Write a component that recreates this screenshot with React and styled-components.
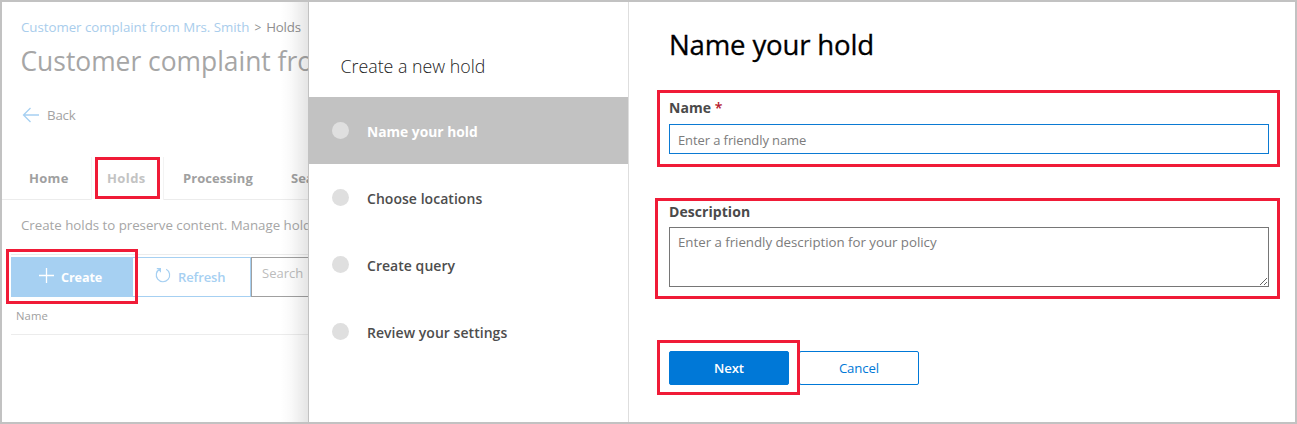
import React from "react";
import styled, { createGlobalStyle, css } from "styled-components";

const Global = createGlobalStyle`
  *, *::before, *::after { box-sizing: border-box; }
  body { margin: 0; background: #fff; font-family: "Open Sans", "Noto Sans", sans-serif; }
`;

const Frame = styled.div`
  display: flex;
  width: 1297px;
  height: 424px;
  border: 2px solid #c2c2c2;
  background: #fff;
  overflow: hidden;
  white-space: nowrap;
`;

const Marked = styled.div`
  position: relative;
`;

/* Red call-out frame drawn around its parent */
const Callout = styled.span`
  position: absolute;
  z-index: 3;
  inset: ${(p) => p.$inset};
  border: 3px solid #f01b37;
  pointer-events: none;
`;

const CasePage = styled.main`
  position: relative;
  display: flex;
  flex-direction: column;
  width: 306px;
  flex: none;
  padding-top: 15px;
`;

const PanelShadow = styled.div`
  position: absolute;
  z-index: 2;
  inset: 0 0 0 auto;
  width: 28px;
  background: linear-gradient(to right, rgba(0, 0, 0, 0), rgba(0, 0, 0, 0.025) 40%, rgba(0, 0, 0, 0.1));
`;

const Clip = styled.div`
  overflow: hidden;
`;

const Breadcrumb = styled.nav`
  padding-left: 19px;
  font-size: 13.3px;
  line-height: 20px;
  letter-spacing: -0.04px;
  color: #8f8f8f;
`;

const Crumb = styled.a`
  color: #a9cdec;
`;

const CrumbArrow = styled.span`
  margin: 0 5px;
  font-size: 12px;
`;

const CrumbHere = styled.span`
  letter-spacing: -0.2px;
`;

const CaseTitle = styled.h1`
  margin: 5px 0 0;
  padding-left: 18.5px;
  font-size: 26.4px;
  line-height: 37px;
  font-weight: 400;
  color: #a6a6a6;
`;

const BackLink = styled.div`
  display: flex;
  align-items: center;
  gap: 7px;
  height: 20px;
  margin-top: 25px;
  padding-left: 20px;
  font-size: 13.3px;
  line-height: 20px;
  letter-spacing: -0.2px;
  color: #a3a3a3;
`;

const TabBar = styled.div`
  display: flex;
  height: 43px;
  margin-top: 32px;
`;

const Tab = styled(Marked)`
  flex: none;
  width: ${(p) => p.$width}px;
  padding-left: ${(p) => p.$pad}px;
  line-height: 42px;
  font-size: 13px;
  font-weight: 700;
  letter-spacing: ${(p) => p.$track || 0}px;
  color: #a0a0a0;
  border-bottom: 1px solid #ececec;
  ${(p) =>
    p.$active &&
    css`
      color: #c3c3c3;
      border: 1px solid #f3f3f3;
      border-width: 0 1px;
    `}
`;

const Intro = styled.p`
  margin: 15px 0 0;
  padding-left: 19px;
  font-size: 13.3px;
  line-height: 20px;
  letter-spacing: -0.02px;
  color: #a6a6a6;
`;

const Toolbar = styled.div`
  display: flex;
  margin: 19px 0 0 9px;
  padding-top: 2px;
  border-top: 1px solid #ececec;
`;

const ToolButton = styled(Marked)`
  display: flex;
  flex: none;
  align-items: center;
  height: 40px;
  width: ${(p) => (p.$primary ? 121 : 119)}px;
  padding-left: ${(p) => (p.$primary ? 28 : 22)}px;
  border: ${(p) => (p.$primary ? "0" : "1px solid #a6d0f2")};
  background: ${(p) => (p.$primary ? "#a6d0f2" : "#fff")};
  color: ${(p) => (p.$primary ? "#fff" : "#a6d0f2")};
  font-size: ${(p) => (p.$primary ? 12.6 : 13)}px;
  font-weight: ${(p) => (p.$primary ? 700 : 600)};
  letter-spacing: -0.1px;
`;

const ToolIcon = styled.svg`
  flex: none;
  margin: 0 ${(p) => p.$gap}px 4px 0;
  fill: none;
  stroke: currentColor;
`;

const SearchBox = styled.div`
  flex: 1;
  height: 40px;
  padding: 5px 0 0 10px;
  border: 1px solid #a0a0a0;
  border-right: 0;
  font-size: 13px;
  line-height: 20px;
  color: #bcbcbc;
`;

const ColumnHeader = styled.div`
  height: 38px;
  margin-left: 9px;
  padding-left: 5px;
  border-bottom: 1px solid #ececec;
  font-size: 11.3px;
  line-height: 37px;
  letter-spacing: 0.1px;
  color: #a0a0a0;
`;

const Wizard = styled.aside`
  flex: none;
  width: 321px;
  border: 1px solid #dedede;
  border-width: 0 1px;
  border-left-color: #c2c2c2;
  background: #fff;
`;

const WizardTitle = styled.h2`
  margin: 0;
  height: 95px;
  padding: 54px 0 0 31.5px;
  font-size: 17.8px;
  line-height: 20px;
  font-weight: 300;
  color: #222;
`;

const Step = styled.div`
  display: flex;
  align-items: center;
  gap: 18px;
  height: 67px;
  padding-left: 23px;
  background: ${(p) => (p.$active ? "#c2c2c2" : "transparent")};
  color: ${(p) => (p.$active ? "#fff" : "#4d4d4d")};
  font-size: ${(p) => (p.$active ? 13.8 : 14)}px;
  font-weight: ${(p) => (p.$active ? 700 : 600)};
  letter-spacing: ${(p) => (p.$active ? 0 : 0.04)}px;
`;

const StepDot = styled.span`
  width: 17px;
  height: 17px;
  border-radius: 50%;
  background: #dfdfdf;
`;

const StepLabel = styled.span`
  padding-top: 2px;
`;

const Form = styled.section`
  flex: 1;
  padding: 23px 26px 0 40px;
`;

const FormTitle = styled.h1`
  margin: 0 0 35px;
  font-size: 27.6px;
  line-height: 38px;
  font-weight: 400;
  letter-spacing: -0.18px;
  color: #000;
  -webkit-text-stroke: 0.3px #000;
`;

const Field = styled(Marked)`
  display: flex;
  flex-direction: column;
  margin-bottom: ${(p) => p.$after}px;
`;

const Label = styled.label`
  height: ${(p) => p.$height}px;
  font-size: 14px;
  line-height: 20px;
  font-weight: 700;
  letter-spacing: 0.06px;
  color: #4a4a4a;
`;

const Required = styled.span`
  color: #b5152b;
  font-weight: 600;
`;

const control = css`
  width: 600px;
  margin: 0;
  border-radius: 0;
  outline: 0;
  background: #fff;
  font-family: inherit;
  line-height: 20px;
  &::placeholder { color: #7c7c7c; opacity: 1; }
`;

const TextInput = styled.input`
  ${control}
  height: 30px;
  padding: 2px 8px 0;
  border: 1px solid #0b7ad3;
  font-size: 13px;
  letter-spacing: -0.1px;
`;

const TextArea = styled.textarea`
  ${control}
  height: 60px;
  padding: 4px 8px;
  border: 1px solid #767676;
  font-size: 13.3px;
  letter-spacing: -0.03px;
`;

const Actions = styled.div`
  display: flex;
  gap: 10px;
`;

const Button = styled(Marked)`
  width: 120px;
  height: 34px;
  border: 1px solid #0078d7;
  border-radius: 2px;
  background: ${(p) => (p.$primary ? "#0078d7" : "#fff")};
  color: ${(p) => (p.$primary ? "#fff" : "#0078d7")};
  font-size: 13.2px;
  font-weight: ${(p) => (p.$primary ? 600 : 400)};
  line-height: 33px;
  letter-spacing: -0.1px;
  text-align: center;
`;

const STEPS = ["Name your hold", "Choose locations", "Create query", "Review your settings"];

export default function App() {
  return (
    <>
      <Global />
      <Frame>
        <CasePage>
          <Breadcrumb>
            <Crumb>Customer complaint from Mrs. Smith</Crumb>
            <CrumbArrow>&gt;</CrumbArrow>
            <CrumbHere>Holds</CrumbHere>
          </Breadcrumb>
          <Clip>
            <CaseTitle>Customer complaint fro</CaseTitle>
          </Clip>
          <BackLink>
            <svg width="18" height="16" viewBox="0 0 18 16" fill="none" stroke="#a6d0f2" strokeWidth="1.3">
              <path d="M17 8H1.5M8.5 1L1.5 8l7 7" />
            </svg>
            Back
          </BackLink>
          <TabBar>
            <Tab $width={89} $pad={27} $track={0.3}>Home</Tab>
            <Tab $width={73} $pad={15} $track={0.4} $active>
              Holds
              <Callout $inset="0 3px 1px 3px" />
            </Tab>
            <Tab $width={125} $pad={19} $track={0.06}>Processing</Tab>
            <Tab $width={19} $pad={2}>
              <Clip>Sea</Clip>
            </Tab>
          </TabBar>
          <Clip>
            <Intro>Create holds to preserve content. Manage hold</Intro>
          </Clip>
          <Toolbar>
            <ToolButton $primary>
              <ToolIcon $gap={7} width="15" height="15" viewBox="0 0 15 15" strokeWidth="1.3">
                <path d="M7.5 0v15M0 7.5h15" />
              </ToolIcon>
              Create
              <Callout $inset="-8px -6px -7px -5px" />
            </ToolButton>
            <ToolButton>
              <ToolIcon $gap={7} width="16" height="16" viewBox="0 0 16 16" strokeWidth="1.2">
                <path d="M11.2 2.2A6.7 6.7 0 1 1 4.9 2.1M1.8 1.6h3.6v3.6" />
              </ToolIcon>
              Refresh
            </ToolButton>
            <SearchBox>Search</SearchBox>
          </Toolbar>
          <ColumnHeader>Name</ColumnHeader>
          <PanelShadow />
        </CasePage>
        <Wizard>
          <WizardTitle>Create a new hold</WizardTitle>
          {STEPS.map((step, i) => (
            <Step key={step} $active={i === 0}>
              <StepDot />
              <StepLabel>{step}</StepLabel>
            </Step>
          ))}
        </Wizard>
        <Form>
          <FormTitle>Name your hold</FormTitle>
          <Field $after={48}>
            <Label $height={26}>
              Name <Required>*</Required>
            </Label>
            <TextInput placeholder="Enter a friendly name" />
            <Callout $inset="-8px -11px -13px -12px" />
          </Field>
          <Field $after={64}>
            <Label $height={25}>Description</Label>
            <TextArea placeholder="Enter a friendly description for your policy" />
            <Callout $inset="-4px -11px -12px -14px" />
          </Field>
          <Actions>
            <Button $primary>
              Next
              <Callout $inset="-12px -12px -11px -13px" />
            </Button>
            <Button>Cancel</Button>
          </Actions>
        </Form>
      </Frame>
    </>
  );
}
